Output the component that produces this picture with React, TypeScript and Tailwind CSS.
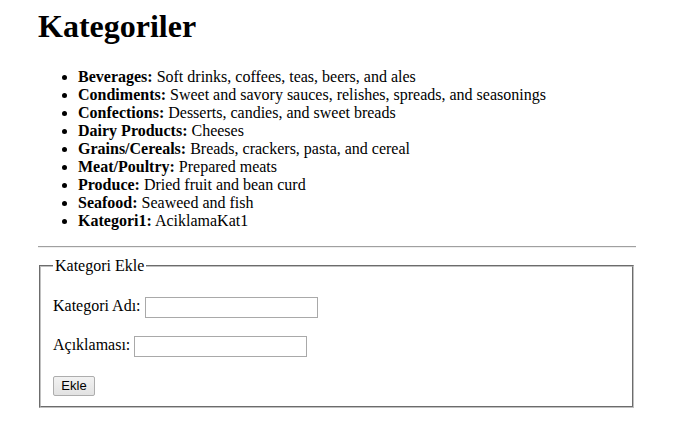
import React from 'react';

type Category = { name: string; description: string };

const categories: Category[] = [
  { name: 'Beverages', description: 'Soft drinks, coffees, teas, beers, and ales' },
  { name: 'Condiments', description: 'Sweet and savory sauces, relishes, spreads, and seasonings' },
  { name: 'Confections', description: 'Desserts, candies, and sweet breads' },
  { name: 'Dairy Products', description: 'Cheeses' },
  { name: 'Grains/Cereals', description: 'Breads, crackers, pasta, and cereal' },
  { name: 'Meat/Poultry', description: 'Prepared meats' },
  { name: 'Produce', description: 'Dried fruit and bean curd' },
  { name: 'Seafood', description: 'Seaweed and fish' },
  { name: 'Kategori1', description: 'AciklamaKat1' },
];

const TextInput = () => (
  <input
    type="text"
    className="h-[21px] w-[173px] border border-[#a9a9a9] bg-white px-[2px] align-middle font-['Liberation_Sans',sans-serif] text-[13px] outline-none"
  />
);

export default function App() {
  return (
    <div className="min-h-[432px] w-[673px] bg-white pl-[38px] pt-[8px] font-['Liberation_Serif',serif] text-[16px] text-black">
      <div className="w-[598px]">
        <h1 className="mb-[24px] text-[32px] font-bold leading-[36px]">Kategoriler</h1>
        <ul className="list-disc pl-[40px] leading-[18px]">
          {categories.map((c) => (
            <li key={c.name}>
              <b>{c.name}:</b> {c.description}
            </li>
          ))}
        </ul>
        <hr className="mt-[16px] mb-[9px] h-0 border-t border-b border-t-[#a0a0a0] border-b-[#eeeeee]" />
        <fieldset className="ml-[1px] mr-[2px] border-2 border-[#c0c0c0] px-[12px] pb-[10px] pt-[4px] [border-style:groove]">
          <legend className="px-[2px] leading-[18px]">Kategori Ekle</legend>
          <p className="my-4 leading-[22px]">
            Kategori Adı: <TextInput />
          </p>
          <p className="my-4 leading-[22px]">
            Açıklaması: <TextInput />
          </p>
          <p className="mt-[17px] leading-[22px]">
            <button
              type="button"
              className="h-[20px] w-[42px] rounded-[2px] border border-[#adadad] bg-gradient-to-b from-[#f2f2f2] to-[#e2e2e2] align-middle font-['Liberation_Sans',sans-serif] text-[13px] leading-[18px] text-black"
            >
              Ekle
            </button>
          </p>
        </fieldset>
      </div>
    </div>
  );
}
